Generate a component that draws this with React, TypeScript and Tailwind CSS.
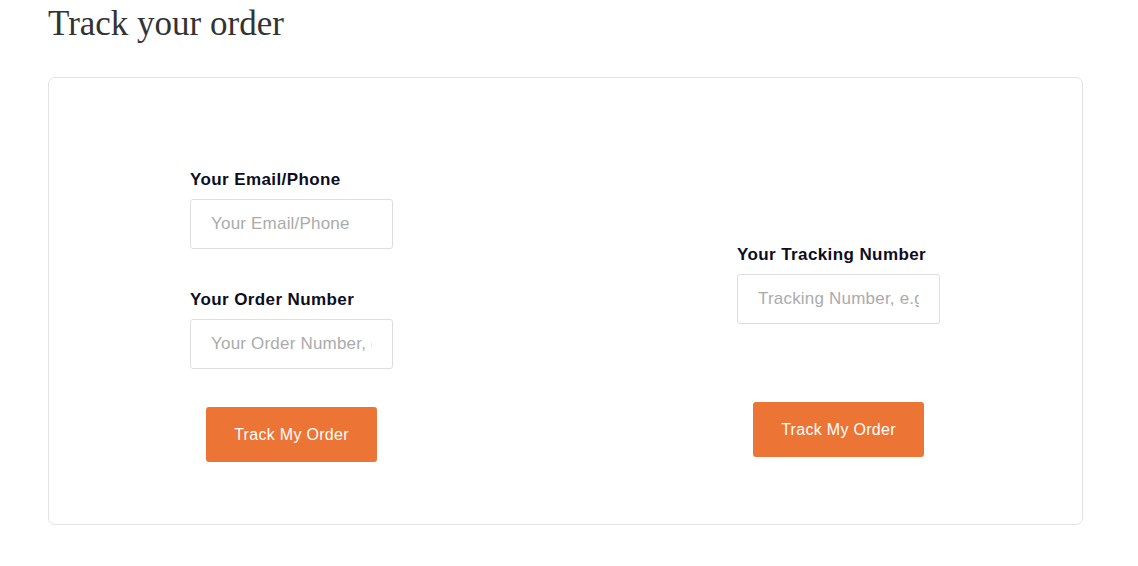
import React from "react";

const Field = ({ label, placeholder }: { label: string; placeholder: string }) => (
  <div className="flex flex-col">
    <label className="h-6 text-[17px] font-bold leading-6 tracking-[0.4px] text-[#0d0d1f]">{label}</label>
    <input
      type="text"
      placeholder={placeholder}
      className="mt-[7px] h-[50px] w-[203px] rounded-[3px] border border-[#dedede] bg-white px-5 text-[17px] tracking-[0.2px] text-[#333] outline-none placeholder:text-[#ababab]"
    />
  </div>
);

const TrackButton = () => (
  <button className="h-[55px] w-[171px] rounded-[3px] bg-[#ec7434] text-[16px] tracking-[0.3px] text-white">
    Track My Order
  </button>
);

export default function App() {
  return (
    <div className="min-h-screen bg-white px-12 pt-[4px] font-['Liberation_Sans',Arial,sans-serif]">
      <h1 className="h-10 font-['Liberation_Serif','Times_New_Roman',serif] text-[35px] font-normal leading-10 text-[#333333]">
        Track your order
      </h1>
      <div className="mt-[33px] flex h-[448px] w-[1035px] rounded-[7px] border border-[#e3e3e3] pl-[141px]">
        <div className="flex flex-col pt-[90px]">
          <Field label="Your Email/Phone" placeholder="Your Email/Phone" />
          <div className="mt-[39px]">
            <Field label="Your Order Number" placeholder="Your Order Number, e.g. 1234567" />
          </div>
          <div className="mt-[38px] flex justify-center">
            <TrackButton />
          </div>
        </div>
        <div className="ml-[344px] flex flex-col pt-[165px]">
          <Field label="Your Tracking Number" placeholder="Tracking Number, e.g. 1Z999AA10123456784" />
          <div className="mt-[78px] flex justify-center">
            <TrackButton />
          </div>
        </div>
      </div>
    </div>
  );
}
